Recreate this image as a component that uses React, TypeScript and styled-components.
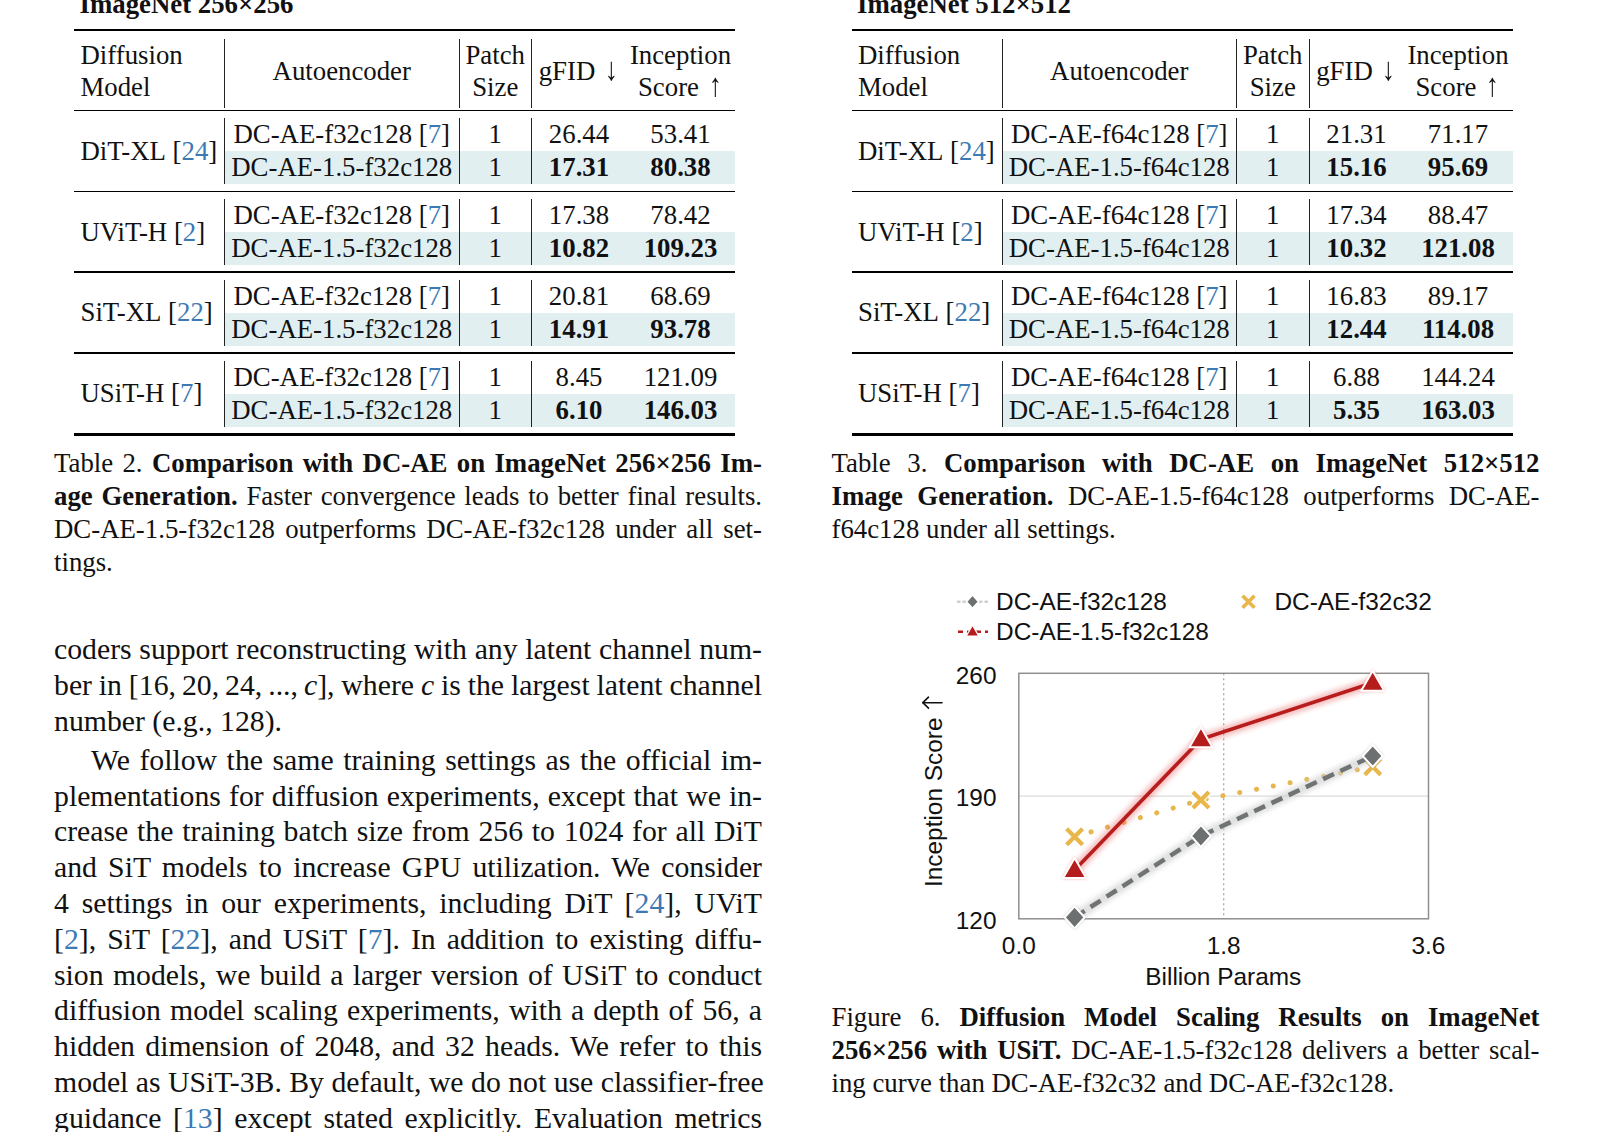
import React from "react";
import styled, { createGlobalStyle } from "styled-components";

const Global = createGlobalStyle`
  html, body { margin: 0; padding: 0; background: #fff; }
  body { width: 1598px; height: 1132px; overflow: hidden; }
`;

const LINK = "#3d7ab3";
const BAND = "#e2eff1";
const COLS = "150px 234.5px 72.5px 95px 109px";
const SERIF = `"Liberation Serif", "Times New Roman", Times, serif`;
const SANS = `"Liberation Sans", Arial, Helvetica, sans-serif`;

const Page = styled.main`
  box-sizing: border-box;
  width: 1598px;
  height: 1132px;
  overflow: hidden;
  padding-left: 54px;
  display: grid;
  grid-template-columns: 708px 708px;
  column-gap: 69.5px;
  align-items: start;
  font-family: ${SERIF};
  color: #111;
`;

const Column = styled.section`
  display: flex;
  flex-direction: column;
`;

const TableBlock = styled.div`
  margin-left: 20px;
  width: 661px;
  display: flex;
  flex-direction: column;
  font-size: 26.8px;
`;

const TableTitle = styled.div`
  margin-top: -10.75px;
  height: 30px;
  line-height: 30px;
  font-weight: 700;
  padding-left: 5.5px;
  white-space: nowrap;
`;

const Rule = styled.div<{ $w: number; $top?: number }>`
  height: ${(p) => p.$w}px;
  margin-top: ${(p) => p.$top ?? 0}px;
  background: #000;
`;

const HeaderRow = styled.div`
  display: grid;
  grid-template-columns: ${COLS};
  height: 64px;
  padding: 8px 0 6.5px;
`;

const HeadCell = styled.div<{ $align?: "left" | "center"; $rule?: boolean }>`
  display: flex;
  flex-direction: column;
  justify-content: center;
  align-items: ${(p) => (p.$align === "left" ? "flex-start" : "center")};
  text-align: ${(p) => p.$align ?? "center"};
  line-height: 32px;
  padding: 0 0 5px ${(p) => (p.$align === "left" ? "6.5px" : "0")};
  border-left: ${(p) => (p.$rule ? "1px solid #222" : "none")};
  white-space: nowrap;
`;

const Arrow = styled.span`
  display: inline-block;
  font-size: 1.22em;
  line-height: 0;
  transform: scaleX(0.8);
  margin-left: 1px;
`;

const Group = styled.div`
  display: grid;
  grid-template-columns: ${COLS};
  grid-template-rows: 33px 33px;
  padding: 7px 0 6.4px;
`;

const ModelCell = styled.div`
  grid-row: 1 / span 2;
  display: flex;
  align-items: center;
  padding-left: 6.5px;
  line-height: 33px;
  white-space: nowrap;
`;

const DataCell = styled.div<{ $rule?: boolean; $band?: boolean; $bold?: boolean }>`
  line-height: 33px;
  text-align: center;
  white-space: nowrap;
  border-left: ${(p) => (p.$rule ? "1px solid #222" : "none")};
  background: ${(p) => (p.$band ? BAND : "transparent")};
  font-weight: ${(p) => (p.$bold ? 700 : 400)};
`;

const Cite = styled.span`
  color: ${LINK};
`;

const Caption = styled.div<{ $top: number }>`
  margin-top: ${(p) => p.$top}px;
  font-size: 26.8px;
  line-height: 33px;
`;

const Line = styled.div<{ $last?: boolean; $indent?: boolean; $tight?: boolean }>`
  white-space: nowrap;
  text-align: justify;
  text-align-last: ${(p) => (p.$last ? "left" : "justify")};
  padding-left: ${(p) => (p.$indent ? "37px" : "0")};
  word-spacing: ${(p) => (p.$tight ? "-2.4px" : "normal")};
`;

const Body = styled.div`
  margin-top: 52.6px;
  font-size: 29.75px;
  line-height: 35.8px;
`;

const Para = styled.div<{ $gap?: number }>`
  margin-top: ${(p) => p.$gap ?? 0}px;
`;

const MathSpan = styled.span`
  word-spacing: -3px;
`;

const Figure = styled.svg`
  display: block;
  margin-top: 23.8px;
  width: 708px;
  height: 431.5px;
  overflow: visible;
`;

const ChartText = styled.text`
  font-family: ${SANS};
  font-size: 24.4px;
  fill: #111;
`;

type Row = { ae: string; cite?: boolean; fid: string; is: string; band?: boolean };
type GroupData = { model: string; ref: string; rows: Row[] };

const table2: GroupData[] = [
  { model: "DiT-XL", ref: "24", rows: [
    { ae: "DC-AE-f32c128", cite: true, fid: "26.44", is: "53.41" },
    { ae: "DC-AE-1.5-f32c128", fid: "17.31", is: "80.38", band: true },
  ] },
  { model: "UViT-H", ref: "2", rows: [
    { ae: "DC-AE-f32c128", cite: true, fid: "17.38", is: "78.42" },
    { ae: "DC-AE-1.5-f32c128", fid: "10.82", is: "109.23", band: true },
  ] },
  { model: "SiT-XL", ref: "22", rows: [
    { ae: "DC-AE-f32c128", cite: true, fid: "20.81", is: "68.69" },
    { ae: "DC-AE-1.5-f32c128", fid: "14.91", is: "93.78", band: true },
  ] },
  { model: "USiT-H", ref: "7", rows: [
    { ae: "DC-AE-f32c128", cite: true, fid: "8.45", is: "121.09" },
    { ae: "DC-AE-1.5-f32c128", fid: "6.10", is: "146.03", band: true },
  ] },
];

const table3: GroupData[] = [
  { model: "DiT-XL", ref: "24", rows: [
    { ae: "DC-AE-f64c128", cite: true, fid: "21.31", is: "71.17" },
    { ae: "DC-AE-1.5-f64c128", fid: "15.16", is: "95.69", band: true },
  ] },
  { model: "UViT-H", ref: "2", rows: [
    { ae: "DC-AE-f64c128", cite: true, fid: "17.34", is: "88.47" },
    { ae: "DC-AE-1.5-f64c128", fid: "10.32", is: "121.08", band: true },
  ] },
  { model: "SiT-XL", ref: "22", rows: [
    { ae: "DC-AE-f64c128", cite: true, fid: "16.83", is: "89.17" },
    { ae: "DC-AE-1.5-f64c128", fid: "12.44", is: "114.08", band: true },
  ] },
  { model: "USiT-H", ref: "7", rows: [
    { ae: "DC-AE-f64c128", cite: true, fid: "6.88", is: "144.24" },
    { ae: "DC-AE-1.5-f64c128", fid: "5.35", is: "163.03", band: true },
  ] },
];

function ResultTable({ title, groups }: { title: string; groups: GroupData[] }) {
  return (
    <TableBlock>
      <TableTitle>{title}</TableTitle>
      <Rule $w={2.4} $top={9.5} />
      <HeaderRow>
        <HeadCell $align="left">
          <span>Diffusion</span>
          <span>Model</span>
        </HeadCell>
        <HeadCell $rule>Autoencoder</HeadCell>
        <HeadCell $rule>
          <span>Patch</span>
          <span>Size</span>
        </HeadCell>
        <HeadCell $rule>
          <span>
            gFID <Arrow>↓</Arrow>
          </span>
        </HeadCell>
        <HeadCell>
          <span>Inception</span>
          <span>
            Score <Arrow>↑</Arrow>
          </span>
        </HeadCell>
      </HeaderRow>
      {groups.map((g, gi) => (
        <React.Fragment key={g.model}>
          <Rule $w={1.5} />
          <Group>
            <ModelCell>
              {g.model}&nbsp;[<Cite>{g.ref}</Cite>]
            </ModelCell>
            {g.rows.map((r) => (
              <React.Fragment key={r.ae}>
                <DataCell $rule $band={r.band}>
                  {r.ae}
                  {r.cite && (
                    <>
                      {" "}[<Cite>7</Cite>]
                    </>
                  )}
                </DataCell>
                <DataCell $rule $band={r.band}>1</DataCell>
                <DataCell $rule $band={r.band} $bold={r.band}>{r.fid}</DataCell>
                <DataCell $band={r.band} $bold={r.band}>{r.is}</DataCell>
              </React.Fragment>
            ))}
          </Group>
          {gi === groups.length - 1 && <Rule $w={2.4} />}
        </React.Fragment>
      ))}
    </TableBlock>
  );
}

const red: [number, number][] = [[242.6, 300], [368.9, 169.3], [540.7, 112.7]];
const gray: [number, number][] = [[242.6, 347.3], [368.9, 266], [540.7, 186]];
const yellow: [number, number][] = [[242.6, 266.7], [368.9, 230], [540.7, 196.7]];
const pts = (a: [number, number][]) => a.map((p) => p.join(",")).join(" ");

const tri = (x: number, y: number, s = 1) =>
  `M${x},${y - 12 * s} L${x + 11.5 * s},${y + 8 * s} L${x - 11.5 * s},${y + 8 * s} Z`;
const dia = (x: number, y: number, s = 1) =>
  `M${x},${y - 11 * s} L${x + 10 * s},${y} L${x},${y + 11 * s} L${x - 10 * s},${y} Z`;
const cross = (x: number, y: number, r = 8) =>
  `M${x - r},${y - r} L${x + r},${y + r} M${x - r},${y + r} L${x + r},${y - r}`;

function ScalingChart() {
  return (
    <Figure viewBox="0 0 708 431.5">
      <defs>
        <filter id="blurGlow" x="-20%" y="-20%" width="140%" height="140%">
          <feGaussianBlur stdDeviation="2.4" />
        </filter>
        <filter id="markShadow" x="-50%" y="-50%" width="200%" height="200%">
          <feGaussianBlur stdDeviation="1.5" />
        </filter>
      </defs>

      {/* legend */}
      <line x1="126" y1="31.7" x2="156" y2="31.7" stroke="#cfcfcf" strokeWidth="2.5" strokeDasharray="1.5 4" strokeLinecap="round" />
      <path d={dia(140.5, 31.7, 0.6)} fill="#6c7070" stroke="#fff" strokeWidth="1.5" />
      <ChartText x="164.1" y="40.4">DC-AE-f32c128</ChartText>
      <path d={cross(416.5, 31.7, 6)} stroke="#e8b64a" strokeWidth="3.6" fill="none" />
      <ChartText x="442.5" y="40.4">DC-AE-f32c32</ChartText>
      <line x1="126" y1="61.7" x2="156" y2="61.7" stroke="#b81d1d" strokeWidth="2.4" strokeDasharray="5 4" />
      <path d={tri(140.5, 61.7, 0.55)} fill="#b51d1d" stroke="#fff" strokeWidth="1.2" />
      <ChartText x="164.1" y="70.4">DC-AE-1.5-f32c128</ChartText>

      {/* axes */}
      <line x1="186.8" y1="226.05" x2="596.5" y2="226.05" stroke="#dcdcdc" strokeWidth="1.2" />
      <line x1="391.7" y1="103.3" x2="391.7" y2="348.8" stroke="#a8a8a8" strokeWidth="1.3" strokeDasharray="2 3" />
      <rect x="186.8" y="103.3" width="409.7" height="245.5" fill="none" stroke="#8f8f8f" strokeWidth="1.5" />

      <ChartText x="164.5" y="114.3" textAnchor="end">260</ChartText>
      <ChartText x="164.5" y="235.6" textAnchor="end">190</ChartText>
      <ChartText x="164.5" y="358.7" textAnchor="end">120</ChartText>
      <ChartText x="186.8" y="383.7" textAnchor="middle">0.0</ChartText>
      <ChartText x="391.7" y="383.7" textAnchor="middle">1.8</ChartText>
      <ChartText x="596.5" y="383.7" textAnchor="middle">3.6</ChartText>
      <ChartText x="391.3" y="415.4" textAnchor="middle">Billion Params</ChartText>
      <ChartText transform="translate(110.2,317) rotate(-90)" textAnchor="start">
        Inception Score
      </ChartText>
      {/* the "↑" after the rotated label, which reads as a left-pointing arrow */}
      <g stroke="#111" strokeWidth="1.6" fill="none" strokeLinecap="round" strokeLinejoin="round">
        <line x1="91" y1="132.7" x2="110" y2="132.7" />
        <path d="M96.5,127.2 L90.8,132.7 L96.5,138.2" />
      </g>

      {/* yellow dotted series */}
      <polyline points={pts(yellow)} fill="none" stroke="#e7b64e" strokeWidth="5" strokeDasharray="0.1 17" strokeLinecap="round" />
      {yellow.map(([x, y], i) => (
        <g key={`y${i}`}>
          <path d={cross(x, y, 8)} stroke="#fff" strokeWidth="7" fill="none" opacity="0.8" />
          <path d={cross(x, y, 8)} stroke="#e8b64a" strokeWidth="4.2" fill="none" />
        </g>
      ))}

      {/* gray dashed series */}
      <polyline points={pts(gray)} fill="none" stroke="#d2d2d2" strokeWidth="10" opacity="0.7" filter="url(#blurGlow)" />
      <polyline points={pts(gray)} fill="none" stroke="#6f7373" strokeWidth="4.5" strokeDasharray="12 7" />
      {gray.map(([x, y], i) => (
        <g key={`g${i}`}>
          <path d={dia(x, y, 1.1)} fill="#999" opacity="0.5" filter="url(#markShadow)" />
          <path d={dia(x, y)} fill="#6c7070" stroke="#fff" strokeWidth="2" />
        </g>
      ))}

      {/* red solid series */}
      <polyline points={pts(red)} fill="none" stroke="#e65a5a" strokeWidth="10" opacity="0.4" filter="url(#blurGlow)" />
      <polyline points={pts(red)} fill="none" stroke="#b81d1d" strokeWidth="3.6" strokeLinejoin="round" />
      {red.map(([x, y], i) => (
        <g key={`r${i}`}>
          <path d={tri(x, y, 1.1)} fill="#e65a5a" opacity="0.5" filter="url(#markShadow)" />
          <path d={tri(x, y)} fill="#b51d1d" stroke="#fff" strokeWidth="2" strokeLinejoin="round" />
        </g>
      ))}
    </Figure>
  );
}

export default function App() {
  return (
    <>
      <Global />
      <Page>
        <Column>
          <ResultTable title="ImageNet 256×256" groups={table2} />
          <Caption $top={11.3}>
            <Line>
              Table 2. <b>Comparison with DC-AE on ImageNet 256×256 Im-</b>
            </Line>
            <Line>
              <b>age Generation.</b> Faster convergence leads to better final results.
            </Line>
            <Line>DC-AE-1.5-f32c128 outperforms DC-AE-f32c128 under all set-</Line>
            <Line $last>tings.</Line>
          </Caption>
          <Body>
            <Para>
              <Line>coders support reconstructing with any latent channel num-</Line>
              <Line $tight>
                ber in <MathSpan>[16,&thinsp;20,&thinsp;24,&thinsp;...,&thinsp;<i>c</i>]</MathSpan>, where <i>c</i> is the largest latent channel
              </Line>
              <Line $last>number (e.g., 128).</Line>
            </Para>
            <Para $gap={2.9}>
              <Line $indent>We follow the same training settings as the official im-</Line>
              <Line>plementations for diffusion experiments, except that we in-</Line>
              <Line>crease the training batch size from 256 to 1024 for all DiT</Line>
              <Line>and SiT models to increase GPU utilization. We consider</Line>
              <Line>
                4 settings in our experiments, including DiT [<Cite>24</Cite>], UViT
              </Line>
              <Line>
                [<Cite>2</Cite>], SiT [<Cite>22</Cite>], and USiT [<Cite>7</Cite>]. In addition to existing diffu-
              </Line>
              <Line>sion models, we build a larger version of USiT to conduct</Line>
              <Line>diffusion model scaling experiments, with a depth of 56, a</Line>
              <Line>hidden dimension of 2048, and 32 heads. We refer to this</Line>
              <Line>model as USiT-3B. By default, we do not use classifier-free</Line>
              <Line>
                guidance [<Cite>13</Cite>] except stated explicitly. Evaluation metrics
              </Line>
            </Para>
          </Body>
        </Column>
        <Column>
          <ResultTable title="ImageNet 512×512" groups={table3} />
          <Caption $top={11.3}>
            <Line>
              Table 3. <b>Comparison with DC-AE on ImageNet 512×512</b>
            </Line>
            <Line>
              <b>Image Generation.</b> DC-AE-1.5-f64c128 outperforms DC-AE-
            </Line>
            <Line $last>f64c128 under all settings.</Line>
          </Caption>
          <ScalingChart />
          <Caption $top={0}>
            <Line>
              Figure 6. <b>Diffusion Model Scaling Results on ImageNet</b>
            </Line>
            <Line>
              <b>256×256 with USiT.</b> DC-AE-1.5-f32c128 delivers a better scal-
            </Line>
            <Line $last>ing curve than DC-AE-f32c32 and DC-AE-f32c128.</Line>
          </Caption>
        </Column>
      </Page>
    </>
  );
}
